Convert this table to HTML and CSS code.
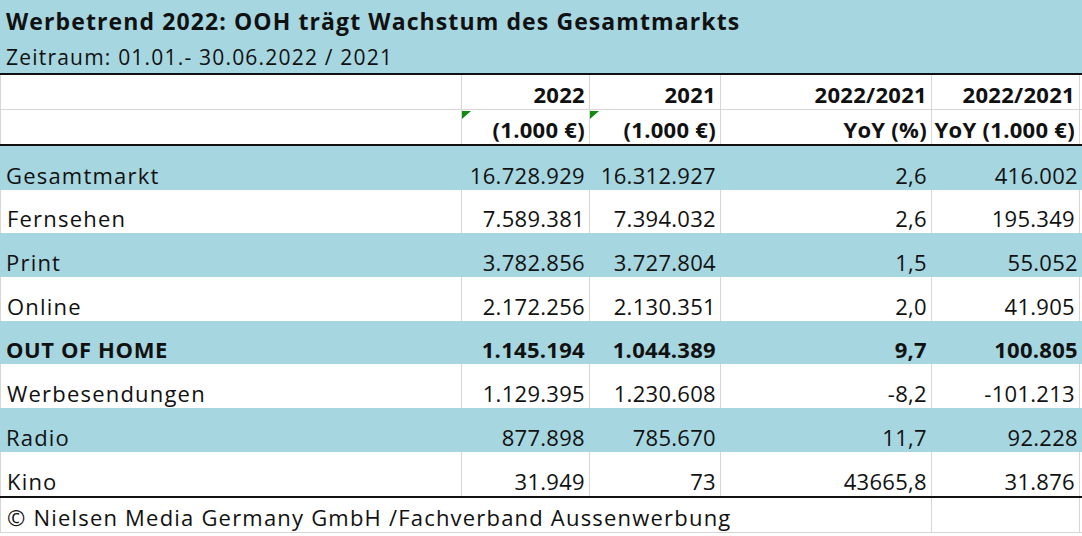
FILE: index.html
```html
<!DOCTYPE html>
<html lang="de">
<head>
<meta charset="utf-8">
<title>Werbetrend 2022</title>
<link rel="stylesheet" href="styles.css">
</head>
<body>
<div class="sheet">
  <div class="band">
    <div class="title">Werbetrend 2022: OOH trägt Wachstum des Gesamtmarkts</div>
    <div class="subtitle">Zeitraum: 01.01.- 30.06.2022 / 2021</div>
  </div>
  <div class="rule"></div>
  <div class="row head head1">
    <div class="cell label"></div>
    <div class="cell num">2022</div>
    <div class="cell num">2021</div>
    <div class="cell num">2022/2021</div>
    <div class="cell num">2022/2021</div>
  </div>
  <div class="row head head2">
    <div class="cell label"></div>
    <div class="cell num flagged"><span class="flag"></span>(1.000 €)</div>
    <div class="cell num flagged"><span class="flag"></span>(1.000 €)</div>
    <div class="cell num">YoY (%)</div>
    <div class="cell num">YoY (1.000 €)</div>
  </div>
  <div class="rule"></div>
  <div class="row data blue r44">
    <div class="cell label">Gesamtmarkt</div>
    <div class="cell num">16.728.929</div>
    <div class="cell num">16.312.927</div>
    <div class="cell num">2,6</div>
    <div class="cell num">416.002</div>
  </div>
  <div class="row data white r43">
    <div class="cell label">Fernsehen</div>
    <div class="cell num">7.589.381</div>
    <div class="cell num">7.394.032</div>
    <div class="cell num">2,6</div>
    <div class="cell num">195.349</div>
  </div>
  <div class="row data blue r44">
    <div class="cell label">Print</div>
    <div class="cell num">3.782.856</div>
    <div class="cell num">3.727.804</div>
    <div class="cell num">1,5</div>
    <div class="cell num">55.052</div>
  </div>
  <div class="row data white r44">
    <div class="cell label">Online</div>
    <div class="cell num">2.172.256</div>
    <div class="cell num">2.130.351</div>
    <div class="cell num">2,0</div>
    <div class="cell num">41.905</div>
  </div>
  <div class="row data blue r43 bold">
    <div class="cell label">OUT OF HOME</div>
    <div class="cell num">1.145.194</div>
    <div class="cell num">1.044.389</div>
    <div class="cell num">9,7</div>
    <div class="cell num">100.805</div>
  </div>
  <div class="row data white r44">
    <div class="cell label">Werbesendungen</div>
    <div class="cell num">1.129.395</div>
    <div class="cell num">1.230.608</div>
    <div class="cell num">-8,2</div>
    <div class="cell num">-101.213</div>
  </div>
  <div class="row data blue r44">
    <div class="cell label">Radio</div>
    <div class="cell num">877.898</div>
    <div class="cell num">785.670</div>
    <div class="cell num">11,7</div>
    <div class="cell num">92.228</div>
  </div>
  <div class="row data white r44">
    <div class="cell label">Kino</div>
    <div class="cell num">31.949</div>
    <div class="cell num">73</div>
    <div class="cell num">43665,8</div>
    <div class="cell num">31.876</div>
  </div>
  <div class="rule"></div>
  <div class="row foot">
    <div class="cell label source">© Nielsen Media Germany GmbH /Fachverband Aussenwerbung</div>
    <div class="cell num"></div>
  </div>
</div>
</body>
</html>
```
FILE: styles.css
```css
html, body {
  margin: 0;
  padding: 0;
  background: #ffffff;
}

.sheet {
  width: 1082px;
  font-family: "Open Sans", "Noto Sans", sans-serif;
  color: #111111;
  font-size: 22px;
  letter-spacing: 1.2px;
}

.band {
  background: #a6d6e0;
  height: 73px;
  padding-left: 6px;
  box-sizing: border-box;
  display: flex;
  flex-direction: column;
}

.title {
  font-weight: 700;
  font-size: 23px;
  letter-spacing: 1.1px;
  line-height: 26px;
  padding-top: 8px;
}

.subtitle {
  line-height: 26px;
  padding-top: 10px;
  font-size: 21px;
}

.rule {
  height: 2px;
  background: #111111;
}

.row {
  display: grid;
  grid-template-columns: 461px 128px 131px 211px 151px;
  box-sizing: border-box;
}

.cell {
  display: flex;
  align-items: flex-end;
  box-sizing: border-box;
  white-space: nowrap;
  line-height: 26px;
}

.label {
  padding-left: 6px;
  justify-content: flex-start;
}

.num {
  justify-content: flex-end;
  padding-right: 4px;
  letter-spacing: 0.3px;
}

.head {
  height: 35px;
  font-weight: 700;
}

.head .cell {
  padding-bottom: 2px;
  border-left: 1px solid #d6d6d6;
}

.head .cell:last-child {
  border-right: 1px solid #d6d6d6;
  margin-right: 2px;
}

.head1 {
  border-bottom: 1px solid #d6d6d6;
}

.head2 {
  height: 34px;
}

.flagged {
  position: relative;
}

.flag {
  position: absolute;
  left: 0;
  top: 1px;
  width: 9px;
  height: 8px;
  background: #138a13;
  clip-path: polygon(0 0, 100% 0, 0 100%);
}

.data .cell {
  padding-bottom: 2px;
}

.r44 { height: 44px; }
.r43 { height: 43px; }

.blue {
  background: #a6d6e0;
}

.white .cell {
  border-left: 1px solid #d6d6d6;
}

.white .cell:last-child {
  border-right: 1px solid #d6d6d6;
  margin-right: 2px;
}

.bold {
  font-weight: 700;
}

.bold .label {
  letter-spacing: 0.6px;
}

.foot {
  grid-template-columns: 931px 151px;
  height: 35px;
  border-bottom: 1px solid #d6d6d6;
}

.foot .cell {
  padding-bottom: 2px;
  border-left: 1px solid #d6d6d6;
}

.foot .cell:last-child {
  border-right: 1px solid #d6d6d6;
  margin-right: 2px;
}
```
